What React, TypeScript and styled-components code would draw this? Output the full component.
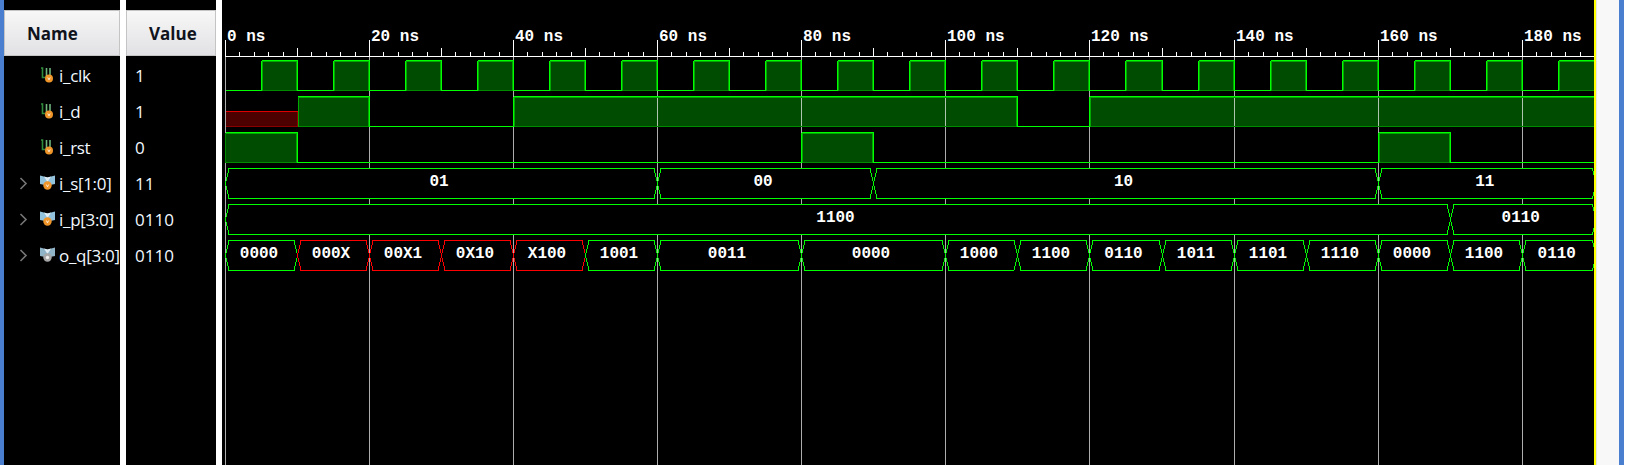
import styled, { createGlobalStyle } from 'styled-components';

type Level = '0' | '1' | 'x';
type IconKind = 'scalar' | 'bus' | 'busOut';

interface SignalRow {
  name: string;
  value: string;
  icon: IconKind;
  expandable?: boolean;
}

const SIGNALS: SignalRow[] = [
  { name: 'i_clk', value: '1', icon: 'scalar' },
  { name: 'i_d', value: '1', icon: 'scalar' },
  { name: 'i_rst', value: '0', icon: 'scalar' },
  { name: 'i_s[1:0]', value: '11', icon: 'bus', expandable: true },
  { name: 'i_p[3:0]', value: '0110', icon: 'bus', expandable: true },
  { name: 'o_q[3:0]', value: '0110', icon: 'busOut', expandable: true },
];

const END_NS = 190;
const WAVE_W = 1372;
const WAVE_H = 465;

// the tool's ruler gains a pixel somewhere after 120 ns
const px = (t: number) => Math.round(3 + 7.2 * t + (t > 125 ? 1 : 0)) + 0.5;

const clockSegs: [number, number, Level][] = [];
for (let t = 0; t < END_NS; t += 10) {
  clockSegs.push([t, t + 5, '0'], [t + 5, t + 10, '1']);
}

const DIGITAL: { top: number; segs: [number, number, Level][] }[] = [
  { top: 60, segs: clockSegs },
  {
    top: 96,
    segs: [
      [0, 10, 'x'],
      [10, 20, '1'],
      [20, 40, '0'],
      [40, 110, '1'],
      [110, 120, '0'],
      [120, END_NS, '1'],
    ],
  },
  {
    top: 132,
    segs: [
      [0, 10, '1'],
      [10, 80, '0'],
      [80, 90, '1'],
      [90, 160, '0'],
      [160, 170, '1'],
      [170, END_NS, '0'],
    ],
  },
];

const BUSES: { top: number; segs: [number, number, string, boolean?][] }[] = [
  { top: 168, segs: [[0, 60, '01'], [60, 90, '00'], [90, 160, '10'], [160, 190, '11']] },
  { top: 204, segs: [[0, 170, '1100'], [170, 190, '0110']] },
  {
    top: 240,
    segs: [
      [0, 10, '0000'],
      [10, 20, '000X', true],
      [20, 30, '00X1', true],
      [30, 40, '0X10', true],
      [40, 50, 'X100', true],
      [50, 60, '1001'],
      [60, 80, '0011'],
      [80, 100, '0000'],
      [100, 110, '1000'],
      [110, 120, '1100'],
      [120, 130, '0110'],
      [130, 140, '1011'],
      [140, 150, '1101'],
      [150, 160, '1110'],
      [160, 170, '0000'],
      [170, 180, '1100'],
      [180, 190, '0110'],
    ],
  },
];

const GlobalStyle = createGlobalStyle`
  html, body {
    margin: 0;
    padding: 0;
    background: #fff;
  }
`;

const Page = styled.div`
  display: flex;
  width: 1636px;
  height: 465px;
  overflow: hidden;
  background: #fff;
  font-family: 'Open Sans', 'Liberation Sans', sans-serif;
`;

const BlueEdge = styled.div`
  flex: none;
  width: 4px;
  background: #4a7fd0;
`;

const Panel = styled.div<{ $w: number }>`
  flex: none;
  width: ${(p) => p.$w}px;
  padding-top: 10px;
  background: #000;
  overflow: hidden;
`;

const Divider = styled.div`
  flex: none;
  width: 6px;
  background: #fff;
`;

const Header = styled.div<{ $pad: number }>`
  box-sizing: border-box;
  height: 46px;
  margin-bottom: 1px;
  padding-left: ${(p) => p.$pad}px;
  display: flex;
  align-items: center;
  border: 1px solid #c4c4c4;
  background: linear-gradient(#f7f7f7, #e1e1e5);
  color: #10131c;
  font-size: 17px;
  font-weight: 700;
`;

const Row = styled.div<{ $tight?: boolean }>`
  height: 36px;
  display: flex;
  align-items: center;
  white-space: nowrap;
  color: #f2f8ff;
  font-size: 17px;
  letter-spacing: ${(p) => (p.$tight ? '-0.3px' : '0')};
`;

const ChevronSlot = styled.div`
  flex: none;
  width: 36px;
  padding-left: 15px;
  box-sizing: border-box;
  display: flex;
`;

const IconSlot = styled.div`
  flex: none;
  width: 19px;
  display: flex;
`;

const ValueText = styled.span`
  padding-left: 9px;
`;

const WavePanel = styled.div`
  flex: none;
  width: ${WAVE_W}px;
  background: #000;
  overflow: hidden;
`;

const WaveSvg = styled.svg`
  display: block;
  shape-rendering: crispEdges;
`;

const WaveLabel = styled.text`
  fill: #fff;
  font-family: 'Liberation Mono', monospace;
  font-size: 16px;
  font-weight: 700;
`;

const YellowEdge = styled.div`
  flex: none;
  width: 2px;
  background: #ffff00;
`;

const Scrollbar = styled.div`
  flex: none;
  width: 22px;
  background: #f8f8f8;
  border-left: 1px solid #e4e4e4;
`;

const OuterBlue = styled.div`
  flex: none;
  width: 5px;
  background: #4a7fd0;
`;

function Chevron() {
  return (
    <svg width="9" height="13" viewBox="0 0 9 13">
      <path d="M1.5 1 L7 6.5 L1.5 12" fill="none" stroke="#767676" strokeWidth="1.6" />
    </svg>
  );
}

function SignalIcon({ kind }: { kind: IconKind }) {
  if (kind === 'scalar') {
    return (
      <svg width="14" height="16" viewBox="0 0 14 16">
        <path d="M1 1 H2.5 V10.5 H5" fill="none" stroke="#2f8a3c" strokeWidth="1.6" />
        <path d="M6.5 10 V1 M10 8 V1" fill="none" stroke="#6fb57c" strokeWidth="1.6" />
        <circle cx="9" cy="11.5" r="4" fill="#f0952a" />
        <path d="M7.8 10.5 L9 12.8 L10.2 10.5" fill="none" stroke="#fff" strokeWidth="0.8" />
      </svg>
    );
  }
  const out = kind === 'busOut';
  return (
    <svg width="15" height="16" viewBox="0 0 15 16">
      <path d="M0 0.5 L7.5 2.5 L15 0.5 V9 L10 10 H5 L0 9 Z" fill={out ? '#8fb4c8' : '#93c3dc'} />
      <path d="M4 1.5 L7.5 7 L11 1.5 L7.5 2.5 Z" fill="#e2eef5" />
      <circle cx="7.5" cy="10.5" r="4.2" fill={out ? '#a6a6a6' : '#f0952a'} />
      {out ? (
        <circle cx="7.5" cy="10.5" r="1.7" fill="#eee" />
      ) : (
        <path d="M6.3 9.5 L7.5 11.8 L8.7 9.5" fill="none" stroke="#fff" strokeWidth="0.8" />
      )}
    </svg>
  );
}

function Axis() {
  const ticks = [];
  for (let t = 0; t <= END_NS; t += 2) {
    const h = t % 20 === 0 ? 16 : t % 10 === 0 ? 8 : 4;
    ticks.push(<line key={t} x1={px(t)} x2={px(t)} y1={56 - h} y2={56} stroke="#fff" />);
  }
  const labels = [];
  for (let t = 0; t <= 180; t += 20) {
    labels.push(
      <WaveLabel key={t} x={px(t) + 1.5} y={41}>
        {t} ns
      </WaveLabel>
    );
  }
  return (
    <g>
      <line x1={3} x2={WAVE_W} y1={56.5} y2={56.5} stroke="#fff" />
      {ticks}
      {labels}
    </g>
  );
}

function GridLines() {
  const lines = [];
  for (let t = 0; t <= 180; t += 20) {
    lines.push(<line key={t} x1={px(t)} x2={px(t)} y1={57} y2={WAVE_H} stroke="rgba(255,255,255,0.68)" />);
  }
  return <g>{lines}</g>;
}

function DigitalFills() {
  return (
    <g>
      {DIGITAL.map((row) =>
        row.segs.map(([a, b, lv]) => {
          if (lv === '0') return null;
          const top = lv === 'x' ? row.top + 15 : row.top;
          return (
            <rect
              key={`${row.top}-${a}`}
              x={px(a)}
              y={top + 0.5}
              width={Math.min(px(b), WAVE_W) - px(a)}
              height={row.top + 30 - top}
              fill={lv === 'x' ? '#4c0000' : '#004c00'}
            />
          );
        })
      )}
    </g>
  );
}

function DigitalLines() {
  const out: React.ReactNode[] = [];
  DIGITAL.forEach((row) => {
    const low = row.top + 30.5;
    const high = row.top + 0.5;
    const mid = row.top + 15.5;
    row.segs.forEach(([a, b, lv], i) => {
      const x0 = px(a);
      const x1 = Math.min(px(b), WAVE_W);
      const k = `${row.top}-${a}`;
      if (lv === '0') {
        out.push(<line key={k} x1={x0} x2={x1} y1={low} y2={low} stroke="#00ff00" />);
      } else if (lv === '1') {
        out.push(<line key={k + 'b'} x1={x0} x2={x1} y1={low} y2={low} stroke="#008a00" />);
        out.push(<line key={k + 'i'} x1={x0} x2={x1} y1={high + 1} y2={high + 1} stroke="#00a800" />);
        out.push(<line key={k + 't'} x1={x0} x2={x1} y1={high} y2={high} stroke="#00ff00" />);
        if (a > 0) out.push(<line key={k + 'l'} x1={x0 + 1} x2={x0 + 1} y1={high + 1} y2={low} stroke="#00a800" />);
        if (b < END_NS) out.push(<line key={k + 'r'} x1={x1 - 1} x2={x1 - 1} y1={high + 1} y2={low} stroke="#00a800" />);
      } else {
        out.push(<line key={k + 'b'} x1={x0} x2={x1} y1={low} y2={low} stroke="#8a0000" />);
        out.push(<line key={k + 't'} x1={x0} x2={x1} y1={mid} y2={mid} stroke="#e00000" />);
        out.push(<line key={k + 'r'} x1={x1} x2={x1} y1={mid} y2={low} stroke="#8a0000" />);
      }
      const next = row.segs[i + 1];
      if (next && next[2] !== lv && lv !== 'x') {
        out.push(<line key={k + 'e'} x1={x1} x2={x1} y1={high} y2={low} stroke="#00ff00" />);
      }
      if (lv === '1' && i === 0) {
        out.push(<line key={k + 's'} x1={x0} x2={x0} y1={high} y2={low} stroke="#008a00" />);
      }
    });
  });
  return <g>{out}</g>;
}

function Buses() {
  return (
    <g>
      {BUSES.map((row) => {
        const top = row.top + 0.5;
        const bottom = row.top + 30.5;
        const mid = row.top + 15.5;
        return row.segs.map(([a, b, label, bad]) => {
          const x0 = px(a);
          const x1 = b >= END_NS ? 1374 : px(b);
          const color = bad ? '#ff0000' : '#00ff00';
          const points = `${x0},${mid} ${x0 + 3.5},${top} ${x1 - 3.5},${top} ${x1},${mid} ${x1 - 3.5},${bottom} ${x0 + 3.5},${bottom}`;
          return (
            <g key={`${row.top}-${a}`}>
              <polygon points={points} fill="#000" stroke={color} />
              <WaveLabel x={(x0 + x1) / 2 - 2.5} y={row.top + 18} textAnchor="middle">
                {label}
              </WaveLabel>
            </g>
          );
        });
      })}
    </g>
  );
}

export default function App() {
  return (
    <Page>
      <GlobalStyle />
      <BlueEdge />
      <Panel $w={116}>
        <Header $pad={22}>Name</Header>
        {SIGNALS.map((s) => (
          <Row key={s.name} $tight>
            <ChevronSlot>{s.expandable && <Chevron />}</ChevronSlot>
            <IconSlot>
              <SignalIcon kind={s.icon} />
            </IconSlot>
            <span>{s.name}</span>
          </Row>
        ))}
      </Panel>
      <Divider />
      <Panel $w={90}>
        <Header $pad={22}>Value</Header>
        {SIGNALS.map((s) => (
          <Row key={s.name}>
            <ValueText>{s.value}</ValueText>
          </Row>
        ))}
      </Panel>
      <Divider />
      <WavePanel>
        <WaveSvg width={WAVE_W} height={WAVE_H} viewBox={`0 0 ${WAVE_W} ${WAVE_H}`}>
          <DigitalFills />
          <GridLines />
          <Axis />
          <DigitalLines />
          <Buses />
        </WaveSvg>
      </WavePanel>
      <YellowEdge />
      <Scrollbar />
      <OuterBlue />
    </Page>
  );
}
